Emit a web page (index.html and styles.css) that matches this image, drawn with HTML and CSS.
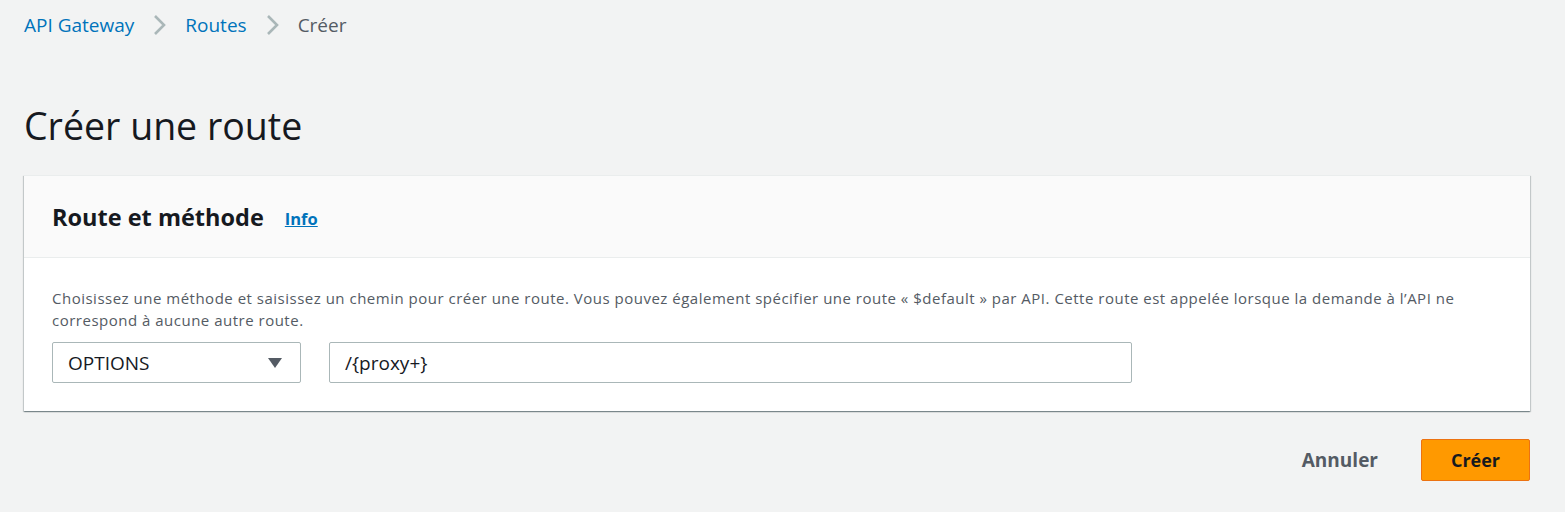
FILE: index.html
```html
<!DOCTYPE html>
<html lang="fr">
<head>
<meta charset="utf-8">
<link rel="stylesheet" href="styles.css">
</head>
<body>
<div class="page">
  <nav class="crumbs">
    <a class="crumb-link">API Gateway</a>
    <svg class="chev" width="13" height="22" viewBox="0 0 13 22"><path d="M2 2 L11 11 L2 20" fill="none" stroke="#aab7b8" stroke-width="2.6"/></svg>
    <a class="crumb-link">Routes</a>
    <svg class="chev" width="13" height="22" viewBox="0 0 13 22"><path d="M2 2 L11 11 L2 20" fill="none" stroke="#aab7b8" stroke-width="2.6"/></svg>
    <span class="crumb-current">Créer</span>
  </nav>
  <h1 class="title">Créer une route</h1>
  <section class="card">
    <header class="card-head">
      <h2 class="card-title">Route et méthode</h2>
      <a class="info">Info</a>
    </header>
    <div class="card-body">
      <p class="desc">Choisissez une méthode et saisissez un chemin pour créer une route. Vous pouvez également spécifier une route « $default » par API. Cette route est appelée lorsque la demande à l’API ne correspond à aucune autre route.</p>
      <div class="fields">
        <div class="select">
          <span>OPTIONS</span>
          <svg width="16" height="12" viewBox="0 0 16 12"><path d="M1 1 H15 L8 11 Z" fill="#545b64"/></svg>
        </div>
        <div class="input">/{proxy+}</div>
      </div>
    </div>
  </section>
  <div class="actions">
    <button class="btn-link">Annuler</button>
    <button class="btn-primary">Créer</button>
  </div>
</div>
</body>
</html>
```

FILE: styles.css
```css
* { box-sizing: border-box; }
html, body { margin: 0; padding: 0; }
body {
  background: #f2f3f3;
  font-family: "Open Sans", "Noto Sans", sans-serif;
  color: #16191f;
  width: 1565px;
  height: 512px;
  overflow: hidden;
}
.page {
  padding: 12px 35px 0 24px;
}
.crumbs {
  display: flex;
  align-items: center;
  gap: 19px;
  font-size: 19px;
  height: 26px;
}
.crumb-link { color: #0073bb; }
.crumb-current { color: #545b64; }
.chev { display: block; }
.title {
  margin: 66px 0 0 0;
  font-weight: 400;
  font-size: 37.5px;
  line-height: 44px;
  color: #16191f;
}
.card {
  margin-top: 27px;
  background: #fff;
  box-shadow: 0 1px 1px 0 rgba(0,28,36,0.3), 1px 1px 1px 0 rgba(0,28,36,0.15), -1px 1px 1px 0 rgba(0,28,36,0.15);
  border-top: 1px solid #eaeded;
}
.card-head {
  background: #fafafa;
  border-bottom: 1px solid #eaeded;
  height: 82px;
  padding: 0 28px;
  display: flex;
  align-items: center;
  gap: 21px;
}
.card-title {
  margin: 0;
  font-size: 23.5px;
  font-weight: 700;
  color: #16191f;
}
.info {
  color: #0073bb;
  font-size: 16.5px;
  font-weight: 700;
  text-decoration: underline;
  margin-top: 4px;
}
.card-body {
  padding: 29px 28px 28px 28px;
}
.desc {
  margin: 0;
  font-size: 15px;
  letter-spacing: 0.5px;
  line-height: 22px;
  color: #545b64;
}
.fields {
  display: flex;
  gap: 28px;
  margin-top: 11px;
}
.select, .input {
  height: 41px;
  border: 1px solid #aab7b8;
  border-radius: 2px;
  background: #fff;
  font-size: 19px;
  color: #16191f;
  display: flex;
  align-items: center;
}
.select {
  width: 249px;
  padding: 0 17px 0 15px;
  justify-content: space-between;
}
.input {
  width: 803px;
  padding: 0 15px;
}
.actions {
  display: flex;
  justify-content: flex-end;
  align-items: center;
  gap: 43px;
  margin-top: 28px;
}
.btn-link {
  background: none;
  border: none;
  padding: 0;
  font-family: inherit;
  font-size: 19px;
  font-weight: 700;
  color: #545b64;
}
.btn-primary {
  font-family: inherit;
  width: 109px;
  height: 42px;
  background: #ff9900;
  border: 1px solid #ec7211;
  border-radius: 2px;
  font-size: 18px;
  font-weight: 700;
  color: #16191f;
}
```
